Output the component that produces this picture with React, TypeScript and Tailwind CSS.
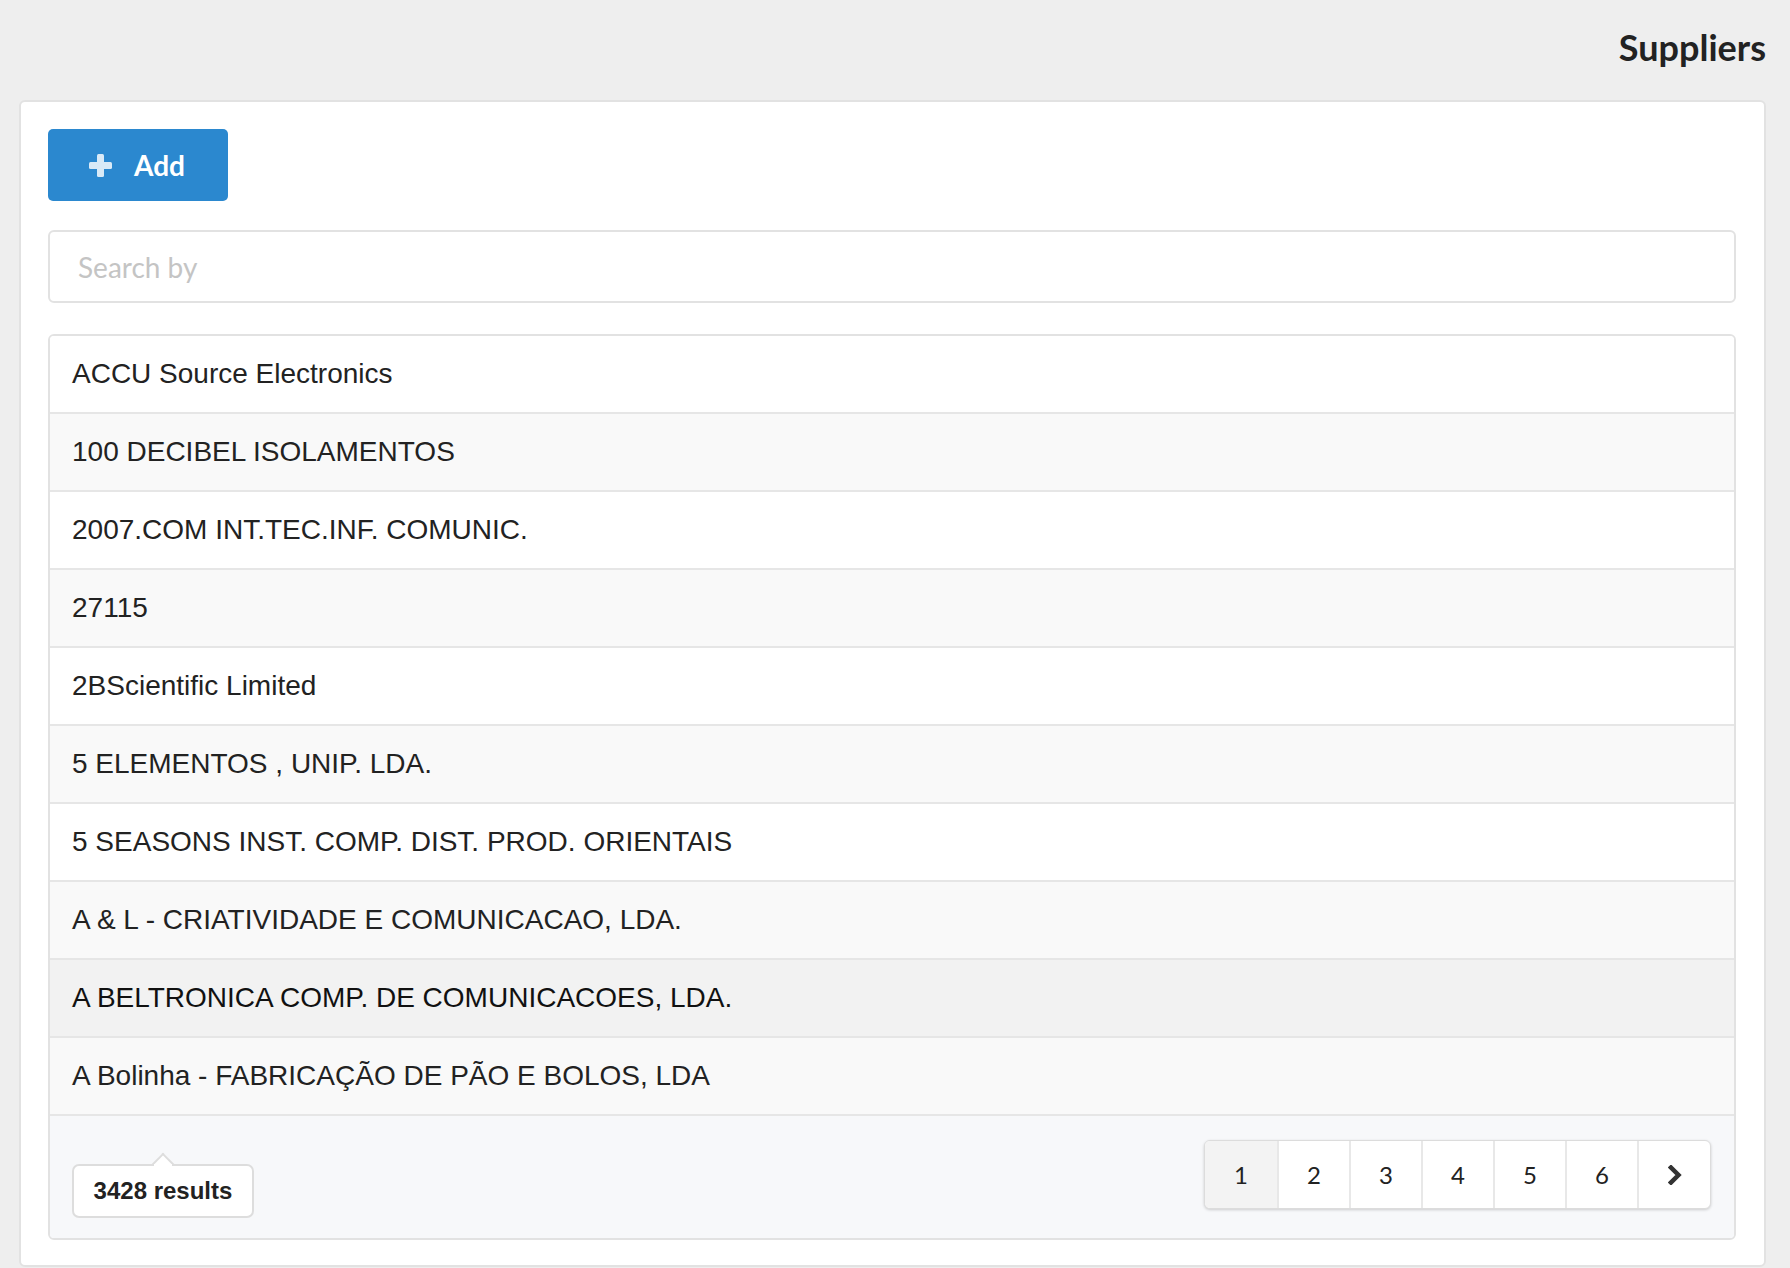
import React from "react";

const suppliers = [
  "ACCU Source Electronics",
  "100 DECIBEL ISOLAMENTOS",
  "2007.COM INT.TEC.INF. COMUNIC.",
  "27115",
  "2BScientific Limited",
  "5 ELEMENTOS , UNIP. LDA.",
  "5 SEASONS INST. COMP. DIST. PROD. ORIENTAIS",
  "A & L - CRIATIVIDADE E COMUNICACAO, LDA.",
  "A BELTRONICA COMP. DE COMUNICACOES, LDA.",
  "A Bolinha - FABRICAÇÃO DE PÃO E BOLOS, LDA",
];

const HOVERED = 8;

function PlusIcon() {
  return (
    <svg width="23" height="23" viewBox="0 0 23 23" aria-hidden="true">
      <rect x="8" y="0" width="7" height="23" rx="1.5" fill="#d9eaf7" />
      <rect x="0" y="8" width="23" height="7" rx="1.5" fill="#d9eaf7" />
    </svg>
  );
}

function ChevronRight() {
  return (
    <svg width="14" height="20" viewBox="0 0 14 20" aria-hidden="true">
      <path
        d="M3 2.5 L10.5 10 L3 17.5"
        fill="none"
        stroke="#333333"
        strokeWidth="4.5"
        strokeLinecap="square"
        strokeLinejoin="miter"
      />
    </svg>
  );
}

function Pagination() {
  const pages = [1, 2, 3, 4, 5, 6];
  return (
    <div className="flex h-[69px] overflow-hidden rounded-[6px] border border-[#dcdcdc] bg-white shadow-[0_1px_3px_rgba(0,0,0,0.18)]">
      {pages.map((p, i) => (
        <div
          key={p}
          className={
            i === 0
              ? "flex w-[72px] items-center justify-center bg-[#f3f3f3] font-['Lato'] text-[24px] text-[#222]"
              : "flex w-[72px] items-center justify-center border-l-2 border-[#e8e8e8] font-['Lato'] text-[24px] text-[#222]"
          }
        >
          {p}
        </div>
      ))}
      <div className="flex w-[73px] items-center justify-center border-l-2 border-[#e8e8e8]">
        <ChevronRight />
      </div>
    </div>
  );
}

function ResultsBadge() {
  return (
    <div className="relative mt-[12px] pt-[12px]">
      <div className="absolute left-1/2 top-[4px] h-[16px] w-[16px] -translate-x-1/2 rotate-45 border-l-2 border-t-2 border-[#dddddd] bg-white" />
      <div className="relative flex h-[54px] w-[182px] items-center justify-center rounded-[7px] border-2 border-[#dddddd] bg-white font-['Liberation_Sans',Arial,sans-serif] text-[24px] font-bold text-[#222]">
        <div className="absolute -top-[2px] left-1/2 h-[3px] w-[18px] -translate-x-1/2 bg-white" />
        3428 results
      </div>
    </div>
  );
}

export default function App() {
  return (
    <div className="min-h-screen bg-[#eeeeee] pl-[19px] pr-[24px]">
      {/* Header */}
      <div className="flex h-[100px] justify-end pt-[26px]">
        <h1 className="font-['Lato',sans-serif] text-[36px] font-bold leading-[43px] text-[#222]">
          Suppliers
        </h1>
      </div>

      {/* Card */}
      <div className="rounded-[6px] border-2 border-[#e2e2e2] bg-white pb-[25px] pl-[27px] pr-[28px] pt-[27px]">
        <button className="flex h-[72px] w-[180px] items-center rounded-[5px] bg-[#2b88cf] pl-[41px]">
          <PlusIcon />
          <span className="ml-[22px] font-['Lato',sans-serif] text-[28px] font-bold text-white">
            Add
          </span>
        </button>

        <input
          placeholder="Search by"
          className="mt-[29px] block h-[73px] w-full rounded-[6px] border-2 border-[#e2e2e2] bg-white pl-[28px] font-['Lato',sans-serif] text-[28px] text-[#333] outline-none placeholder:text-[#c4c4c4]"
        />

        {/* List */}
        <div className="mt-[31px] overflow-hidden rounded-[6px] border-2 border-[#e2e2e2]">
          {suppliers.map((name, i) => (
            <div
              key={name}
              className={
                i === HOVERED
                  ? "flex h-[78px] items-center border-b-2 border-[#e6e6e6] bg-[#f2f2f2] pl-[22px] font-['Liberation_Sans',Arial,sans-serif] text-[28px] text-[#111]"
                  : i % 2 === 1
                    ? "flex h-[78px] items-center border-b-2 border-[#e6e6e6] bg-[#f9f9f9] pl-[22px] font-['Liberation_Sans',Arial,sans-serif] text-[28px] text-[#222]"
                    : "flex h-[78px] items-center border-b-2 border-[#e6e6e6] bg-white pl-[22px] font-['Liberation_Sans',Arial,sans-serif] text-[28px] text-[#222]"
              }
            >
              {name}
            </div>
          ))}

          {/* Footer */}
          <div className="flex items-start justify-between bg-[#f7f8fa] pb-[20px] pl-[22px] pr-[23px] pt-[24px]">
            <ResultsBadge />
            <Pagination />
          </div>
        </div>
      </div>
    </div>
  );
}
